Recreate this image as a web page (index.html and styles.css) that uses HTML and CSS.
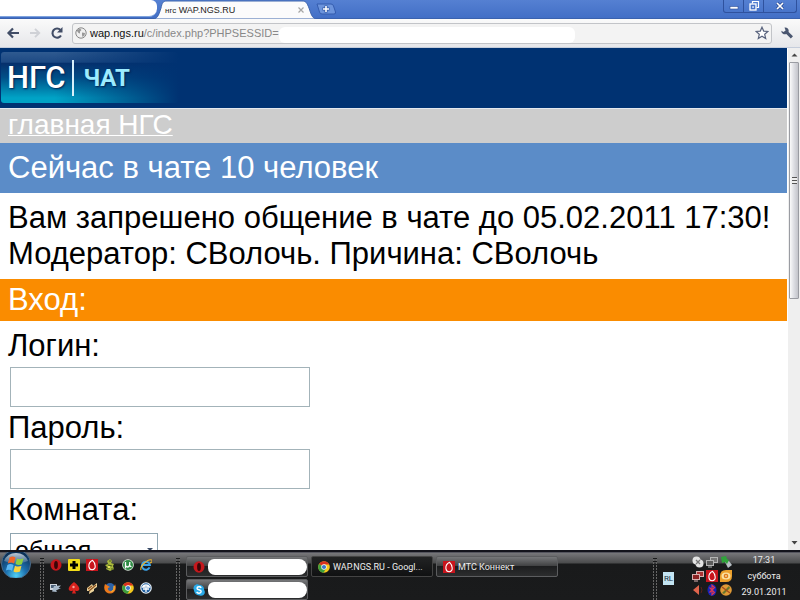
FILE: index.html
```html
<!DOCTYPE html>
<html lang="ru">
<head>
    <meta charset="utf-8">
    <title>WAP.NGS.RU</title>
    <link rel="stylesheet" href="styles.css">
</head>
<body>
    <!-- shared icons -->
    <svg class="sprite" aria-hidden="true">
        <defs>
            <radialGradient id="orbFill" cx="50%" cy="90%" r="80%">
                <stop offset="0" stop-color="#4fd0f5"/>
                <stop offset=".45" stop-color="#1c6fae"/>
                <stop offset="1" stop-color="#0c2f55"/>
            </radialGradient>
            <linearGradient id="orbShine" x1="0" y1="0" x2="0" y2="1">
                <stop offset="0" stop-color="#fff" stop-opacity=".75"/>
                <stop offset="1" stop-color="#fff" stop-opacity=".1"/>
            </linearGradient>
        </defs>
        <symbol id="opera" viewBox="0 0 12 12">
            <ellipse cx="6" cy="6" rx="5.5" ry="5.8" fill="#c4171c"/>
            <ellipse cx="6" cy="6" rx="1.9" ry="3.9" fill="#3a0507"/>
        </symbol>
        <symbol id="mts" viewBox="0 0 12 12">
            <rect width="12" height="12" fill="#c8141c"/>
            <path d="M6.6 1.3C4 2.6 2.6 5.200 2.900 7.600 3.200 9.700 4.500 10.700 6.100 10.700 8.200 10.700 9.400 9.300 9.200 7 9 4.600 8 2.600 6.600 1.300z" fill="none" stroke="#fff" stroke-width="1.1"/>
        </symbol>
        <symbol id="chrome" viewBox="0 0 12 12">
            <circle cx="6" cy="6" r="5.8" fill="#f4c91d"/>
            <path d="M6 6L1 3.100A5.800 5.800 0 0 1 11.200 3.500L6 3.500z" fill="#d8301f"/>
            <path d="M1 3.100A5.800 5.800 0 0 0 5.500 11.800L8.200 7.300 6 6z" fill="#3c9f3f"/>
            <circle cx="6" cy="6" r="2.700" fill="#fff"/>
            <circle cx="6" cy="6" r="2.100" fill="#3c78c8"/>
        </symbol>
    </svg>

    <header class="tabstrip">
        <div class="tab tab-back"></div>
        <div class="tab tab-active">
            <svg class="tab-shape" viewBox="0 0 162 19" preserveAspectRatio="none" aria-hidden="true">
                <path d="M0 19C4 18 5 14 7 8 8 3 9 1 13 1H148C152 1 153 3 155 8 157 14 158 18 162 19z" fill="#fbfbfc" stroke="#3d64ac"/>
            </svg>
            <span class="tab-title"><small>нгс</small> WAP.NGS.RU</span>
            <button class="tab-close" aria-label="Закрыть вкладку">
                <svg viewBox="0 0 6 6"><path d="M.5.5l5 5M5.500.5l-5 5" stroke="#a5a5a5" stroke-width="1.200"/></svg>
            </button>
        </div>
        <button class="new-tab" aria-label="Новая вкладка">
            <svg viewBox="0 0 20 12">
                <path d="M1 1h14q2 0 2.500 2l2 6q.5 2-1.500 2H6q-2 0-2.500-2z" fill="#6c94dc" stroke="#345cae"/>
                <path d="M10 2.500v7M6.500 6h7" stroke="#2f55a0" stroke-width="3"/>
                <path d="M10 3v6M7 6h6" stroke="#fff" stroke-width="1.600"/>
            </svg>
        </button>
        <div class="window-buttons">
            <button aria-label="Свернуть"><svg viewBox="0 0 12 12"><rect x="2" y="6.500" width="8" height="2.500" fill="#fff" stroke="#2f4f96" stroke-width=".6"/></svg></button>
            <button aria-label="Восстановить"><svg viewBox="0 0 12 12"><path d="M4.500 3.500v-2h6v6h-2" fill="none" stroke="#fff" stroke-width="1.200"/><rect x="2" y="4" width="6" height="6" fill="#4a75c8" stroke="#fff" stroke-width="1.300"/><rect x="4.300" y="6.300" width="1.500" height="1.500" fill="#fff"/></svg></button>
            <button class="close" aria-label="Закрыть"><svg viewBox="0 0 12 12"><path d="M3 3l6 6M9 3L3 9" stroke="#28468c" stroke-width="3"/><path d="M3 3l6 6M9 3L3 9" stroke="#fff" stroke-width="1.700"/></svg></button>
        </div>
    </header>

    <div class="toolbar">
        <button aria-label="Назад"><svg viewBox="0 0 14 14"><path d="M13 7H3M7 2.500L2.500 7 7 11.500" fill="none" stroke="#414d66" stroke-width="2.200"/></svg></button>
        <button aria-label="Вперёд"><svg viewBox="0 0 14 14"><path d="M2 7h9M7 2.800L11.200 7 7 11.200" fill="none" stroke="#cfd1d6" stroke-width="1.900"/></svg></button>
        <button aria-label="Обновить"><svg viewBox="0 0 14 14"><path d="M11 9.500A4.600 4.600 0 1 1 10.500 4" fill="none" stroke="#414d66" stroke-width="2.100"/><path d="M12.500 1v5.500H7z" fill="#414d66"/></svg></button>
        <div class="address">
            <svg class="globe" viewBox="0 0 12 12" aria-hidden="true"><circle cx="6" cy="6" r="5.200" fill="#f0f0f0" stroke="#888"/><path d="M2 3l3-1.500L6.500 3 5 4.500v2L3.500 6 2 4zM7 5.500l3 .5-.5 2.500L7.500 10 7 8z" fill="#999"/></svg>
            <span class="url"><b>wap.ngs.ru</b>/c/index.php?PHPSESSID=</span>
            <span class="url-blank"></span>
            <button aria-label="Добавить в закладки"><svg viewBox="0 0 14 14"><path d="M7 1.200l1.700 3.900 4.200.4-3.200 2.800 1 4.200L7 10.300l-3.700 2.200 1-4.200L1.100 5.500l4.200-.4z" fill="#fff" stroke="#58627c" stroke-width="1.200"/></svg></button>
        </div>
        <button aria-label="Настройки"><svg viewBox="0 0 14 14"><path d="M4.500 1.500A3.500 3.500 0 0 1 8.600 5.900L13 10.300 10.800 12.500 6.300 8A3.500 3.500 0 0 1 1.300 4.700L3.500 6 5.600 4.500z" fill="#4b5770"/></svg></button>
    </div>

    <div class="viewport">
        <main class="page">
            <div class="site-header">
                <div class="logo"><span class="brand">НГС</span><span class="section">ЧАТ</span></div>
            </div>
            <nav class="crumbs"><a href="#">главная НГС</a></nav>
            <h1 class="online">Сейчас в чате 10 человек</h1>
            <p class="message">Вам запрешено общение в чате до 05.02.2011 17:30!<br>Модератор: СВолочь. Причина: СВолочь</p>
            <h2 class="login-title">Вход:</h2>
            <form class="login">
                <label for="login">Логин:</label>
                <input type="text" id="login">
                <label for="password">Пароль:</label>
                <input type="password" id="password">
                <label for="room">Комната:</label>
                <div class="select">
                    <select id="room"><option>общая</option></select>
                </div>
            </form>
        </main>
        <div class="scrollbar" aria-hidden="true">
            <svg viewBox="0 0 13 14"><path d="M3.500 8.500h6l-3-3z" fill="#444"/></svg>
            <div class="track"><div class="thumb"><i></i></div></div>
            <svg viewBox="0 0 13 14"><path d="M3.500 5h6l-3 3.500z" fill="#444"/></svg>
        </div>
    </div>

    <footer class="taskbar">
        <button class="start" aria-label="Пуск">
            <svg viewBox="0 0 32 26">
                <circle cx="16" cy="12" r="14.500" fill="url(#orbFill)" stroke="#4a6a88"/>
                <path d="M4 9A13 13 0 0 1 28 9Q16 14 4 9z" fill="url(#orbShine)"/>
                <path d="M9.500 5.500q3-2 6 0l-1.500 6q-3-2-6.200 0z" fill="#f0652a"/>
                <path d="M17 6.500q3 1.500 6.500-.3l-1.600 6q-3.200 1.600-6.400-.2z" fill="#8fcf3f"/>
                <path d="M7.400 13q3-1.800 6.200.1l-1.600 5.700q-3-1.800-6.100-.2z" fill="#5db8f2"/>
                <path d="M15 13.700q3.200 1.700 6.500.1L20 19.500q-3.200 1.600-6.500-.1z" fill="#fbd23c"/>
            </svg>
        </button>
        <div class="grip"></div>
        <div class="quick">
            <svg><use href="#opera"/></svg>
            <svg viewBox="0 0 12 12"><rect width="12" height="12" rx="1" fill="#f2dc19"/><path d="M4.500 2h3v2.500H10v3H7.500V10h-3V7.500H2v-3h2.500z" fill="#000"/></svg>
            <svg><use href="#mts"/></svg>
            <svg viewBox="0 0 12 12"><path d="M6 0l2 2-1 2 3 1-1 2 1 3-4 2-4-2 1-2-2-2 3-1-1-3z" fill="#a8b83c"/><path d="M5 2h2M4 6l4 1M3 9h3M7 10h3" stroke="#4f611c" stroke-width="1.200"/><path d="M4 7h2v2H4z" fill="#eae25c"/></svg>
            <svg viewBox="0 0 12 12"><circle cx="6" cy="6" r="5.800" fill="#e4f2e4"/><circle cx="6" cy="6" r="5" fill="#2f8b45"/><path d="M3.500 3v6.500M3.500 3.500V6q.3 2 2.200 2Q8 7.800 7.800 3M7.800 6q.2 2 1.700 1.500" fill="none" stroke="#fff" stroke-width="1.300"/></svg>
            <svg viewBox="0 0 12 12"><path d="M9.600 8.400A4 4 0 1 1 9.900 6H3" fill="none" stroke="#3ba2e6" stroke-width="2"/><path d="M1 11Q0 8 4.500 4T11.500 1 10 4" fill="none" stroke="#efb72c" stroke-width="1.100"/></svg>
            <svg viewBox="0 0 12 12"><path d="M0 2h7v6H0z" fill="#cfd5dc"/><path d="M1 3h5v3H1z" fill="#4c6178"/><path d="M4 4l7-.5L8.500 6H11L6 8.500l1 1.500-5-.5z" fill="#a9bacb"/></svg>
            <svg viewBox="0 0 12 12"><path d="M6 0Q12 4.500 11.300 7.500 10 10 7 8.500L8 11.500H4L5 8.500Q2 10 .7 7.500 0 4.500 6 0z" fill="#d8231e"/><circle cx="5.500" cy="5" r="1.200" fill="#f4a39a"/></svg>
            <svg viewBox="0 0 12 12"><path d="M1 6l5-4 1 2 4-3v4l-3 2v2l-5 3 .5-3H1z" fill="#ecd49c"/><path d="M3 9l7-6M2 7l4-3" stroke="#8b5220" stroke-width="1.200"/></svg>
            <svg viewBox="0 0 12 12"><circle cx="6" cy="6" r="5" fill="#2e63a8"/><path d="M1 2Q-1 7 2 10q4 3 8 0 3-3 1-8-.2 2-1 2 0 5-4 5Q3.500 8.500 4 6L6 5 3.500 3.500z" fill="#ec7a1c"/><path d="M10 4q1 4-2.500 6" fill="none" stroke="#fbc53a"/></svg>
            <svg><use href="#chrome"/></svg>
            <svg viewBox="0 0 12 12"><circle cx="6" cy="6" r="5.800" fill="#e9f2fa"/><circle cx="6" cy="6" r="4.700" fill="#24619f"/><path d="M2.500 5q1-2 3.500-2t3.500 2zM3 7h6M6 6v4" fill="none" stroke="#fff" stroke-width="1.300"/></svg>
        </div>
        <div class="grip"></div>
        <div class="tasks">
            <button class="task" aria-label="Opera"><svg><use href="#opera"/></svg><span class="blank"></span></button>
            <button class="task current"><svg><use href="#chrome"/></svg>WAP.NGS.RU - Googl...</button>
            <button class="task"><svg><use href="#mts"/></svg>МТС Коннект</button>
            <button class="task" aria-label="Skype"><svg viewBox="0 0 12 12"><path d="M3.500.3Q5 0 6 .8q5 .2 5.200 5.200 1.600 3-.7 5-1.700 1.400-3.900.4Q1.400 11.400.9 6-.8 2 3.500.3z" fill="#2aaae8"/><path d="M8.200 3.800Q7.500 2.600 6 2.700q-2 .1-2 1.500 0 1.200 2 1.600 2.300.5 2.200 1.800Q8 9.100 6 9.200 4.300 9.200 3.700 7.900" fill="none" stroke="#fff" stroke-width="1.400"/></svg><span class="blank"></span></button>
        </div>
        <div class="grip"></div>
        <span class="lang">RL</span>
        <div class="tray">
            <svg viewBox="0 0 12 12"><circle cx="4.500" cy="4.500" r="4" fill="#e3e3e3"/><circle cx="7.500" cy="7.500" r="4" fill="#e3e3e3"/><path d="M4 4l4 4M8 4L4 8" stroke="#777" stroke-width="1.300"/></svg>
            <svg viewBox="0 0 12 12"><rect x="4.500" y="1.500" width="7" height="5" fill="#777" stroke="#b4b4b4"/><rect x=".5" y="4.500" width="7" height="5" fill="#5c5c5c" stroke="#b4b4b4"/><path d="M2 11h4" stroke="#b4b4b4"/></svg>
            <svg viewBox="0 0 12 12"><path d="M5 6l4-1 3 4-4 3z" fill="#b8bfc4"/><path d="M1 1l5-1 1 3 2 1-2 4-2-2-3 1z" fill="#2fa33a"/></svg>
            <svg viewBox="0 0 12 12"><rect x="4.500" y="1.500" width="7" height="5" fill="#a33" stroke="#d9b0b0"/><rect x=".5" y="4.500" width="7" height="5" fill="#8c2323" stroke="#d9b0b0"/><path d="M2 11h4" stroke="#d9b0b0"/></svg>
            <svg><use href="#mts"/></svg>
            <svg viewBox="0 0 12 12"><path d="M0 6Q0 0 6 0h6v6q0 6-6 6H0z" fill="#eda12c"/><ellipse cx="6" cy="6" rx="4.500" ry="3.500" fill="#fbe0a0"/><circle cx="6" cy="6" r="2.300" fill="#e07d18"/><circle cx="6" cy="6" r=".8" fill="#fff"/></svg>
            <svg viewBox="0 0 12 12"><path d="M1 6l6-5v10z" fill="#e0644c"/><path d="M9 3q2 3 0 6" fill="none" stroke="#5c2018"/></svg>
            <svg viewBox="0 0 12 12"><ellipse cx="6" cy="6" rx="4.500" ry="6" fill="#1723b8"/><path d="M3.500 3.500l5 5L6 10.700V1.300l2.500 2.200-5 5" fill="none" stroke="#e03a52" stroke-width="1.100"/></svg>
            <svg viewBox="0 0 12 12"><circle cx="6" cy="6" r="5.800" fill="#e09a36"/><path d="M2 9l7-7 1 2-6 6z" fill="#68762c"/><path d="M2 3l8 6" stroke="#a64b1b" stroke-width="1.300"/></svg>
        </div>
        <div class="clock"><span>17:31</span><span>суббота</span><span>29.01.2011</span></div>
    </footer>
</body>
</html>
```
FILE: styles.css
```css
* {
    box-sizing: border-box;
}

body {
    margin: 0;
    height: 100vh;
    display: flex;
    flex-direction: column;
    overflow: hidden;
    font-family: "Liberation Sans", Arial, sans-serif;
    background: #fff;
}

button {
    display: flex;
    align-items: center;
    justify-content: center;
    padding: 0;
    border: 0;
    background: none;
    font: inherit;
    color: inherit;
}

svg {
    display: block;
    flex-shrink: 0;
}

.sprite {
    position: absolute;
    width: 0;
    height: 0;
}

/* Tabs */
.tabstrip {
    display: flex;
    flex-shrink: 0;
    height: 19px;
    background: linear-gradient(#5580d2, #426fc6);
    border-bottom: 1px solid #3a62ae;
}

.tab-back {
    width: 157px;
    height: 17px;
    background: #fff;
    border-bottom: 1px solid #7fa3dc;
    border-radius: 0 6px 8px 0;
}

.tab-active {
    position: relative;
    display: flex;
    align-items: center;
    width: 162px;
    height: 19px;
    margin-left: -3px;
    padding: 1px 12px 0 11px;
}

.tab-shape {
    position: absolute;
    inset: 0;
    width: 100%;
    height: 100%;
}

.tab-title {
    position: relative;
    flex: 1;
    font-size: 9px;
    color: #222;
}

.tab-title small {
    font-size: 8px;
}

.tab-close {
    position: relative;
}

.tab-close svg {
    width: 6px;
    height: 6px;
}

.new-tab {
    height: 18px;
}

.new-tab svg {
    width: 20px;
    height: 12px;
}

.window-buttons {
    display: flex;
    height: 13px;
    margin-left: auto;
    margin-right: 3px;
    border: 1px solid #2f529e;
    border-top: 0;
    border-radius: 0 0 3px 3px;
}

.window-buttons button {
    width: 20px;
    border-right: 1px solid #2f529e;
}

.window-buttons .close {
    width: 32px;
    border-right: 0;
}

.window-buttons svg {
    width: 12px;
    height: 12px;
}

/* Address row */
.toolbar {
    display: flex;
    align-items: center;
    flex-shrink: 0;
    gap: 8px;
    height: 29px;
    padding: 0 6px;
    background: linear-gradient(#fafafa, #e6e7ea);
    border-bottom: 1px solid #c5cddb;
}

.toolbar svg {
    width: 14px;
    height: 14px;
}

.address {
    display: flex;
    align-items: center;
    flex: 1;
    height: 21px;
    padding: 0 2px;
    background: #f3f3f3;
    border: 1px solid #c2c4c8;
    border-radius: 3px;
}

.address .globe {
    width: 12px;
    height: 12px;
    margin-right: 3px;
}

.url {
    font-size: 11px;
    color: #888;
}

.url b {
    font-weight: normal;
    color: #111;
}

.url-blank {
    width: 296px;
    height: 16px;
    margin-top: 4px;
    background: #fff;
    border-radius: 6px;
}

.address button {
    margin-left: auto;
}

/* Page */
.viewport {
    display: flex;
    flex: 1;
    min-height: 0;
}

.page {
    flex: 1;
    overflow: hidden;
    font-size: 31px;
    line-height: 36px;
}

.site-header {
    height: 61px;
    padding: 4px 1px;
    background: #003272;
    border-bottom: 1px solid #e4e8ee;
}

.logo {
    display: flex;
    align-items: center;
    width: 178px;
    height: 51px;
    padding-left: 6px;
    border-radius: 3px;
    background:
        linear-gradient(90deg, rgba(0, 50, 114, 0) 30%, #003272),
        linear-gradient(#2f5a90 0, #1d4a84 20%, #06306c 22%, #005088 50%, #00a3c6 90%);
    font-family: Roboto, "Liberation Sans", sans-serif;
    color: #fff;
    text-shadow: 1px 1px 2px #002050;
}

.brand {
    padding-right: 7px;
    border-right: 2px solid #d8f0fa;
    font-size: 31px;
    font-weight: 500;
}

.section {
    padding-left: 9px;
    font-size: 24px;
    font-weight: bold;
    color: #9cecff;
}

.crumbs {
    height: 34px;
    padding: 0 8px;
    background: #cdcdcd;
    font-size: 28px;
    line-height: 32px;
}

.crumbs a {
    color: #fff;
    text-decoration-thickness: 1px;
}

.online,
.login-title {
    margin: 0;
    font-size: 31px;
    font-weight: normal;
    color: #fff;
}

.online {
    padding: 7px 8px;
    background: #5b8cc8;
}

.message {
    margin: 0;
    padding: 7px 8px;
    white-space: nowrap;
}

.login-title {
    padding: 3px 8px;
    background: #fa8c00;
}

.login {
    display: flex;
    flex-direction: column;
    align-items: flex-start;
    padding: 7px 8px;
}

.login input {
    width: 300px;
    height: 40px;
    margin: 3px 2px;
    padding: 0 4px;
    border: 1px solid #a3b3b9;
    background: #fff;
    font: inherit;
}

.select {
    position: relative;
    margin: 3px 2px;
}

.select select {
    appearance: none;
    width: 148px;
    height: 34px;
    padding: 0 4px;
    border: 1px solid #8fa5b0;
    border-radius: 0;
    background: #fff;
    font-family: inherit;
    font-size: 25px;
    color: #000;
}

.select::after {
    content: "";
    position: absolute;
    right: 5px;
    top: 17px;
    border: 3px solid transparent;
    border-top-color: #3a4c68;
}

.scrollbar {
    display: flex;
    flex-direction: column;
    width: 13px;
    background: #efefef;
    border-left: 1px solid #fff;
}

.scrollbar svg {
    width: 13px;
    height: 14px;
}

.track {
    flex: 1;
    padding: 0 1px;
}

.thumb {
    display: flex;
    align-items: center;
    justify-content: center;
    height: 50%;
    border: 1px solid #9a9ca2;
    border-radius: 1px;
    background: linear-gradient(90deg, #fafafa, #dcdde2 50%, #c3c4ca);
}

.thumb i {
    width: 5px;
    height: 7px;
    background: repeating-linear-gradient(#555 0 1px, #eee 1px 3px);
}

/* Taskbar */
.taskbar {
    display: flex;
    flex-shrink: 0;
    height: 50px;
    padding-top: 4px;
    border-top: 2px solid #14141c;
    background: linear-gradient(#55555e 0 1px, #77777a 1px, #4a4b4c 11px, #191a1b 12px, #1a1b1c);
    font-family: Roboto, "Liberation Sans", sans-serif;
    font-size: 9px;
    color: #eee;
}

.start {
    align-self: flex-start;
    width: 32px;
    height: 26px;
    margin-top: -4px;
}

.start svg {
    width: 32px;
    height: 26px;
}

.grip {
    width: 4px;
    margin: 0 6px 0 8px;
    background: repeating-linear-gradient(transparent 0 2px, #1a1b1c 2px 3px), repeating-linear-gradient(90deg, #666 0 1px, transparent 1px 3px);
}

.quick {
    display: grid;
    grid-template-columns: repeat(6, 12px);
    grid-template-rows: 12px 12px;
    gap: 11px 6px;
    padding: 3px 16px 0 0;
}

.quick svg,
.task svg,
.tray svg {
    width: 12px;
    height: 12px;
}

.tasks {
    display: grid;
    grid-template-columns: repeat(3, 122px);
    grid-template-rows: 21px 21px;
    gap: 2px 3px;
    flex: 1;
}

.task {
    justify-content: flex-start;
    gap: 3px;
    padding: 0 6px;
    border: 1px solid #5c5d5f;
    border-radius: 2px;
    background: linear-gradient(#77787a, #3f4041 48%, #1d1e1f 50%, #2c2d2e);
    white-space: nowrap;
}

.task.current {
    background: linear-gradient(#222324, #101112);
    border-color: #444;
}

.blank {
    flex: 1;
    height: 16px;
    margin-right: -6px;
    background: #fff;
    border-radius: 6px 8px 8px 7px;
}

.lang {
    align-self: center;
    width: 11px;
    height: 13px;
    margin-right: 18px;
    background: #c3e4f2;
    color: #1a2c40;
    font-size: 8px;
    line-height: 13px;
    text-align: center;
}

.tray {
    display: grid;
    grid-template-columns: repeat(3, 12px);
    align-content: start;
    gap: 2px;
}

.clock {
    display: flex;
    flex-direction: column;
    width: 64px;
    margin: -4px 4px 0 0;
    text-align: center;
    font-size: 9px;
    line-height: 16px;
}
```
